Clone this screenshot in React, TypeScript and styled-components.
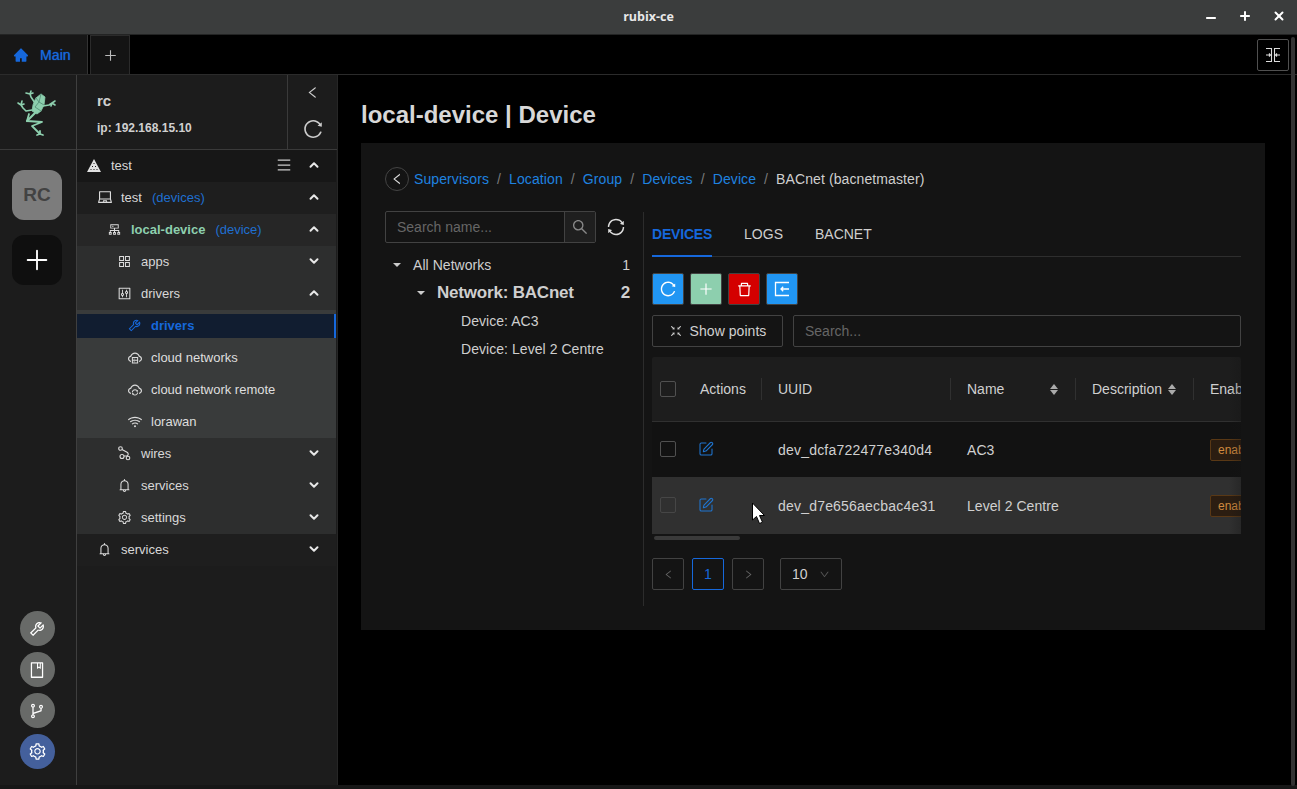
import React from "react";
import styled, { createGlobalStyle } from "styled-components";
import { ChevronUp, ChevronDown, Minus, Plus, X, SquarePen } from "lucide-react";
import {
  AiFillHome, AiOutlineLeft, AiOutlineRight, AiOutlineDown, AiOutlineReload, AiOutlineSync, AiOutlineMenu, AiOutlineLaptop, AiOutlineCluster,
  AiOutlineAppstore, AiOutlineControl, AiOutlineTool, AiOutlineCloudServer, AiOutlineCloudSync, AiOutlineWifi, AiOutlineBell,
  AiOutlineSetting, AiOutlineSearch, AiOutlineDelete, AiOutlineBook, AiOutlineBranches, AiOutlinePlus,
  AiOutlineFullscreenExit,
} from "react-icons/ai";

const Global = createGlobalStyle`
  html, body { margin: 0; padding: 0; background: #000; height: 789px; overflow: hidden; }
  body { font-family: "Liberation Sans", Arial, sans-serif; font-size: 14px; color: #d4d4d4; }
  * { box-sizing: border-box; }
`;
const Page = styled.div`width: 1297px; height: 789px; display: flex; flex-direction: column; position: relative; background: #000;`;
const TitleBar = styled.div`height: 35px; flex: none; background: #3b3d3d; border-bottom: 1px solid #232424; display: flex; align-items: center; position: relative; justify-content: center; color: #e8e8e8; font: 700 12.5px "Open Sans", sans-serif; padding-bottom: 2px;`;
const WinControls = styled.div`position: absolute; right: 11px; top: 9px; display: flex; gap: 20px; color: #fff; svg { display: block; } svg:first-child { transform: translateY(2px); }`;
const TabBar = styled.div`height: 40px; flex: none; display: flex; align-items: stretch; border-bottom: 1px solid #2b2b2b; position: relative;`;
const MainTab = styled.div`width: 88px; background: #171717; border-right: 1px solid #333; display: flex; align-items: center; padding-left: 13px; gap: 11px; color: #1668dc; font-size: 14px; letter-spacing: .1px; text-shadow: 0 0 1px #1668dc;`;
const AddTab = styled.div`margin-left: 2px; width: 40px; background: #141414; border: 1px solid #2b2b2b; border-bottom: 0; display: flex; align-items: center; justify-content: center; color: #bbb;`;
const CornerBtn = styled.div`position: absolute; right: 8px; top: 4px; width: 32px; height: 32px; border: 1px solid #505050; border-radius: 2px; display: flex; align-items: center; justify-content: center; background: #000;`;
const ScrollStub = styled.div`position: absolute; right: 2px; top: 2px; width: 4px; height: 749px; background: #333; border-radius: 2px;`;
const Body = styled.div`flex: 1; display: flex; min-height: 0; height: 710px;`;
const Rail = styled.div`width: 77px; flex: none; background: #1c1c1c; border-right: 1px solid #3f3f3f; padding-right: 2px; display: flex; flex-direction: column; align-items: center;`;
const LogoBox = styled.div`height: 75px; width: calc(100% + 2px); margin-right: -2px; flex: none; border-bottom: 1px solid #3a3a3a; padding: 2px 2px 0 0; display: flex; align-items: center; justify-content: center;`;
const Tile = styled.div<{ $bg: string; $c: string }>`margin-top: 20px; width: 50px; height: 50px; border-radius: 12px; background: ${p => p.$bg}; color: ${p => p.$c}; font-weight: 700; font-size: 19px; display: flex; align-items: center; justify-content: center; & + & { margin-top: 15px; }`;
const Dots = styled.div`margin-top: auto; margin-bottom: 16px; display: flex; flex-direction: column; gap: 6px;`;
const Dot = styled.div<{ $bg: string }>`width: 35px; height: 35px; border-radius: 50%; background: ${p => p.$bg}; color: #fff; display: flex; align-items: center; justify-content: center;`;
const Side = styled.div`width: 261px; flex: none; background: #1c1c1c; border-right: 1px solid #262626; display: flex; flex-direction: column;`;
const SideHead = styled.div`height: 75px; flex: none; display: flex; border-bottom: 1px solid #3a3a3a;`;
const HeadInfo = styled.div`flex: 1; padding: 16px 0 0 20px; color: #d0d0d0; font-weight: 700;`;
const HeadName = styled.div`font-size: 15px; line-height: 20px;`;
const HeadIp = styled.div`font-size: 12px; line-height: 16px; margin-top: 9px;`;
const HeadActions = styled.div`width: 50px; border-left: 1px solid #3a3a3a; display: flex; flex-direction: column; align-items: center; color: #ccc; padding-top: 10px; gap: 18px;`;
const RowList = styled.div`margin-right: 1px; display: flex; flex-direction: column;`;
const Row = styled.div<{ $bg: string; $pad: number }>`height: 32px; display: flex; align-items: center; background: ${p => p.$bg}; padding: 0 15px 2px ${p => p.$pad}px; color: #d8d8d8; font-size: 13px;`;
const Ico = styled.span`width: 24px; display: flex; align-items: center; color: #dcdcdc; flex: none;`;
const ActiveIco = styled(Ico)`color: #1668dc;`;
const RowText = styled.span<{ $green?: boolean }>`color: ${p => (p.$green ? "#8dcfae" : "#d8d8d8")}; font-weight: ${p => (p.$green ? 700 : 400)};`;
const Kind = styled.span`color: #1f6fd0; margin-left: 10px;`;
const Grow = styled.span`flex: 1;`;
const Chev = styled.span`color: #e8e8e8; display: flex;`;
const MenuIcon = styled.span`display: flex; margin-right: 15px; color: #ccc;`;
const SubGroup = styled.div`background: #393b3b;`;
const ActiveWrap = styled.div`padding: 4px 0;`;
const ActiveRow = styled.div`height: 24px; background: #111d30; border-right: 2px solid #1668dc; padding: 0 0 1px 50px; display: flex; align-items: center; color: #1668dc; font-weight: 700; font-size: 13px;`;
const SubRow = styled.div`height: 32px; padding: 0 0 1px 50px; display: flex; align-items: center; font-size: 13px; color: #dedede;`;
const Content = styled.div`flex: 1; padding: 24px 32px 0 23px; background: #000;`;
const Title = styled.h1`margin: 0; font-size: 24px; line-height: 32px; font-weight: 700; color: #d8d8d8; height: 44px;`;
const Panel = styled.div`height: 487px; background: #141414; padding: 20px 24px; display: flex; flex-direction: column;`;
const Crumbs = styled.div`display: flex; align-items: center; height: 32px; font-size: 14px; letter-spacing: .1px; color: #888; margin-bottom: 16px;`;
const Back = styled.span`width: 24px; height: 24px; border-radius: 50%; border: 1px solid #444; display: flex; align-items: center; justify-content: center; color: #ddd; margin-right: 5px;`;
const CrumbLink = styled.span`color: #1f83e0;`;
const Sep = styled.span`margin: 0 8px; color: #7a7a7a;`;
const CrumbNow = styled.span`color: #cfcfcf;`;
const Split = styled.div`display: flex; flex: 1;`;
const TreeCol = styled.div`width: 258px; flex: none; display: flex; flex-direction: column;`;
const SearchRow = styled.div`display: flex; align-items: center; gap: 10px; height: 32px; margin-bottom: 8px; color: #ddd;`;
const SearchBox = styled.div`width: 211px; height: 32px; display: flex; border: 1px solid #424242; border-radius: 2px; overflow: hidden;`;
const SearchInput = styled.div`flex: 1; padding-left: 11px; line-height: 30px; color: #666; font-size: 14px;`;
const SearchBtn = styled.div`width: 31px; border-left: 1px solid #424242; background: #1f1f1f; display: flex; align-items: center; justify-content: center; color: #888;`;
const TreeRow = styled.div<{ $pad: number; $bold?: boolean }>`display: flex; align-items: center; height: 28px; padding-left: ${p => p.$pad}px; padding-right: 13px; font-size: ${p => (p.$bold ? 17 : 14)}px; letter-spacing: ${p => (p.$bold ? -0.2 : 0.05)}px; font-weight: ${p => (p.$bold ? 700 : 400)}; color: #cfcfcf;`;
const Caret = styled.span`width: 0; height: 0; border-left: 4px solid transparent; border-right: 4px solid transparent; border-top: 4px solid #ccc; margin-right: 12px;`;
const Right = styled.div`flex: 1; min-width: 0; border-left: 1px solid #2c2c2c; padding-left: 8px; height: 394px; display: flex; flex-direction: column; margin-top: 1px;`;
const Tabs = styled.div`display: flex; gap: 32px; height: 45px; border-bottom: 1px solid #2e2e2e; font-size: 14px; color: #cfcfcf; flex: none;`;
const TabItem = styled.div<{ $on?: boolean }>`height: 45px; line-height: 44px; ${p => p.$on && "color:#1668dc;font-weight:700;letter-spacing:-0.2px;border-bottom:2px solid #1668dc;"}`;
const Tools = styled.div`display: flex; gap: 6px; margin-top: 16px; height: 32px;`;
const ToolBtn = styled.div<{ $bg: string }>`width: 32px; height: 32px; background: ${p => p.$bg}; border: 1px solid #424242; border-radius: 2px; color: #fff; display: flex; align-items: center; justify-content: center;`;
const FilterRow = styled.div`display: flex; gap: 10px; margin-top: 10px; height: 32px;`;
const ShowBtn = styled.div`width: 131px; border: 1px solid #424242; border-radius: 2px; display: flex; align-items: center; justify-content: center; gap: 7px; color: #d0d0d0; font-size: 14px; letter-spacing: .05px;`;
const FilterInput = styled.div`flex: 1; border: 1px solid #424242; border-radius: 2px; padding-left: 11px; line-height: 30px; color: #666; font-size: 14px;`;
const TableWrap = styled.div`margin-top: 10px; width: 589px; overflow: hidden; flex: none; position: relative;`;
const grid = `display: grid; grid-template-columns: 48px 61px 189px 125px 118px 60px; align-items: center;`;
const THead = styled.div`${grid} height: 65px; background: #1d1d1d; border-bottom: 1px solid #303030; border-radius: 2px 2px 0 0; font-size: 14px; color: #d0d0d0;`;
const Th = styled.div`height: 22px; display: flex; align-items: center; padding: 0 16px; border-left: 1px solid #303030; justify-content: space-between; white-space: nowrap;`;
const ThPlain = styled.div`padding-left: 0;`;
const Sort = styled.span`display: flex; flex-direction: column; gap: 1px; margin-right: 1px;`;
const SortUp = styled.i`width: 0; height: 0; border-left: 4px solid transparent; border-right: 4px solid transparent; border-bottom: 5px solid #aaa;`;
const SortDown = styled.i`width: 0; height: 0; border-left: 4px solid transparent; border-right: 4px solid transparent; border-top: 5px solid #aaa;`;
const TRow = styled.div<{ $hover?: boolean }>`${grid} height: ${p => (p.$hover ? 57 : 55)}px; background: ${p => (p.$hover ? "#303030" : "#121212")}; font-size: 14px; color: #d0d0d0;`;
const CheckCell = styled.div`padding: 0 0 1px 8px; display: flex;`;
const Check = styled.span<{ $dim?: boolean }>`width: 16px; height: 16px; border: 1px solid ${p => (p.$dim ? "#464646" : "#505050")}; border-radius: 2px;`;
const ActionCell = styled.div`color: #1f74cf; padding-bottom: 1px; margin-left: -2px; display: flex;`;
const Cell = styled.div`padding-left: 17px; white-space: nowrap; letter-spacing: .2px;`;
const NameCell = styled(Cell)`letter-spacing: .05px;`;
const Tag = styled.span`display: inline-block; height: 22px; line-height: 20px; padding: 0 7px; background: #2b1d11; border: 1px solid #593815; color: #d08a3f; font-size: 12px; border-radius: 2px; margin-left: 17px; justify-self: start; white-space: nowrap;`;
const Fade = styled.div`position: absolute; right: 0; top: 0; bottom: 0; width: 12px; background: linear-gradient(to right, transparent, rgba(20,20,20,.3));`;
const Bar = styled.div`height: 4px; margin: 2px 0 0 2px; width: 86px; background: #3a3a3a; border-radius: 2px;`;
const Pager = styled.div`display: flex; gap: 8px; margin-top: 18px; align-items: center;`;
const PageBtn = styled.div<{ $on?: boolean }>`width: 32px; height: 32px; border: 1px solid ${p => (p.$on ? "#1668dc" : "#424242")}; border-radius: 2px; display: flex; align-items: center; justify-content: center; color: ${p => (p.$on ? "#1668dc" : "#666")}; font-size: 14px;`;
const SizeSel = styled.div`margin-left: 8px; width: 62px; height: 32px; border: 1px solid #424242; border-radius: 2px; display: flex; align-items: center; justify-content: space-between; padding: 0 11px; color: #d0d0d0; font-size: 14px; svg { color: #555; }`;
const Cursor = styled.svg`position: absolute; left: 751px; top: 502px;`;
const Bottom = styled.div`height: 4px; background: #171717; flex: none;`;

const Frog = () => (
  <svg width="42" height="48" viewBox="0 0 42 48" fill="none" stroke="#8dcfae" strokeLinecap="round" strokeLinejoin="round">
    <path d="M20 9l5-4 4 3-1 8-3 6-4 3-5-3 1-6z" fill="#8dcfae" stroke="#8dcfae" strokeWidth=".8" />
    <path d="M25 5l-2 8 5 3M20 9l3 4-4 5 6 4" stroke="#4f8a72" strokeWidth=".8" />
    <path d="M19 14l-4-6-1-3M14 5l-4-1M14 5l1-3M14 5l3-1" strokeWidth="1.6" />
    <path d="M27 17l6-1 3-2M36 14l3-2M36 14l3 2M36 14l-1 3" strokeWidth="1.6" />
    <path d="M16 21l-6 1-3-3-2-3M5 16l-3-2M5 16l1-4M5 16l3-1" strokeWidth="1.6" />
    <path d="M13 25l-2 7 15 1-10 4 8 8M24 45l-3 1M24 45l3 1M24 45v-3" strokeWidth="1.8" />
    <path d="M19 24l-8 8" strokeWidth="2.2" />
  </svg>
);
const Cap = () => (
  <svg width="14" height="13" viewBox="0 0 14 13" fill="#e0e0e0">
    <path d="M7 0l7 13H0z" />
    <path d="M7 4v1M5.5 7v1M8.5 7v1M4 10v1M7 10v1M10 10v1" stroke="#1a1a1a" strokeWidth="1" />
  </svg>
);
const Wires = () => (
  <svg width="14" height="15" viewBox="0 0 14 15" fill="none" stroke="#dcdcdc" strokeWidth="1.1">
    <circle cx="3.5" cy="2.5" r="1.8" />
    <circle cx="5" cy="10.5" r="2" />
    <circle cx="11" cy="12" r="1.8" />
    <path d="M5 3.5l5.5 3a2 2 0 0 1-1 3.5H7" />
  </svg>
);
const Sorter = () => <Sort><SortUp /><SortDown /></Sort>;
const Up = () => <Chev><ChevronUp size={14} strokeWidth={3.4} /></Chev>;
const Dn = () => <Chev><ChevronDown size={14} strokeWidth={3.4} /></Chev>;

export default function App() {
  return (
    <Page>
      <Global />
      <TitleBar>
        rubix-ce
        <WinControls>
          <Minus size={14} strokeWidth={3.4} />
          <Plus size={14} strokeWidth={3.4} />
          <X size={14} strokeWidth={3.4} />
        </WinControls>
      </TitleBar>
      <TabBar>
        <MainTab><AiFillHome size={16} />Main</MainTab>
        <AddTab><AiOutlinePlus size={15} /></AddTab>
        <CornerBtn>
          <svg width="16" height="16" viewBox="0 0 16 16" fill="none" stroke="#ddd" strokeWidth="1.1"><path d="M1 1.5h5.5v13H1M15 1.5H9.5v13H15" /><path d="M1 8h4.5M4 6.5L5.5 8 4 9.5M15 8h-4.5M12 6.5L10.5 8l1.5 1.5" /></svg>
        </CornerBtn>
        <ScrollStub />
      </TabBar>
      <Body>
        <Rail>
          <LogoBox><Frog /></LogoBox>
          <Tile $bg="#7c7c7c" $c="#424242">RC</Tile>
          <Tile $bg="#0f0f0f" $c="#fff"><Plus size={32} strokeWidth={1.4} /></Tile>
          <Dots>
            <Dot $bg="#686a68"><AiOutlineTool size={18} /></Dot>
            <Dot $bg="#686a68"><AiOutlineBook size={18} /></Dot>
            <Dot $bg="#686a68"><AiOutlineBranches size={18} /></Dot>
            <Dot $bg="#44609c"><AiOutlineSetting size={19} /></Dot>
          </Dots>
        </Rail>
        <Side>
          <SideHead>
            <HeadInfo><HeadName>rc</HeadName><HeadIp>ip: 192.168.15.10</HeadIp></HeadInfo>
            <HeadActions><AiOutlineLeft size={15} /><AiOutlineReload size={22} /></HeadActions>
          </SideHead>
          <RowList>
            <Row $bg="#171717" $pad={10}><Ico><Cap /></Ico><RowText>test</RowText><Grow /><MenuIcon><AiOutlineMenu size={16} /></MenuIcon><Up /></Row>
            <Row $bg="#1e1e1e" $pad={20}><Ico><AiOutlineLaptop size={16} /></Ico><RowText>test</RowText><Kind>(devices)</Kind><Grow /><Up /></Row>
            <Row $bg="#262626" $pad={30}><Ico><AiOutlineCluster size={15} /></Ico><RowText $green>local-device</RowText><Kind>(device)</Kind><Grow /><Up /></Row>
            <Row $bg="#2d2e2e" $pad={40}><Ico><AiOutlineAppstore size={15} /></Ico><RowText>apps</RowText><Grow /><Dn /></Row>
            <Row $bg="#2d2e2e" $pad={40}><Ico><AiOutlineControl size={15} /></Ico><RowText>drivers</RowText><Grow /><Up /></Row>
            <SubGroup>
              <ActiveWrap><ActiveRow><ActiveIco><AiOutlineTool size={15} /></ActiveIco>drivers</ActiveRow></ActiveWrap>
              <SubRow><Ico><AiOutlineCloudServer size={16} /></Ico>cloud networks</SubRow>
              <SubRow><Ico><AiOutlineCloudSync size={16} /></Ico>cloud network remote</SubRow>
              <SubRow><Ico><AiOutlineWifi size={16} /></Ico>lorawan</SubRow>
            </SubGroup>
            <Row $bg="#2d2e2e" $pad={40}><Ico><Wires /></Ico><RowText>wires</RowText><Grow /><Dn /></Row>
            <Row $bg="#2d2e2e" $pad={40}><Ico><AiOutlineBell size={15} /></Ico><RowText>services</RowText><Grow /><Dn /></Row>
            <Row $bg="#2d2e2e" $pad={40}><Ico><AiOutlineSetting size={15} /></Ico><RowText>settings</RowText><Grow /><Dn /></Row>
            <Row $bg="#1e1e1e" $pad={20}><Ico><AiOutlineBell size={15} /></Ico><RowText>services</RowText><Grow /><Dn /></Row>
          </RowList>
        </Side>
        <Content>
          <Title>local-device | Device</Title>
          <Panel>
            <Crumbs>
              <Back><AiOutlineLeft size={14} /></Back>
              <CrumbLink>Supervisors</CrumbLink><Sep>/</Sep>
              <CrumbLink>Location</CrumbLink><Sep>/</Sep>
              <CrumbLink>Group</CrumbLink><Sep>/</Sep>
              <CrumbLink>Devices</CrumbLink><Sep>/</Sep>
              <CrumbLink>Device</CrumbLink><Sep>/</Sep>
              <CrumbNow>BACnet (bacnetmaster)</CrumbNow>
            </Crumbs>
            <Split>
              <TreeCol>
                <SearchRow>
                  <SearchBox><SearchInput>Search name...</SearchInput><SearchBtn><AiOutlineSearch size={18} /></SearchBtn></SearchBox>
                  <AiOutlineSync size={20} />
                </SearchRow>
                <TreeRow $pad={8}><Caret />All Networks<Grow />1</TreeRow>
                <TreeRow $pad={32} $bold><Caret />Network: BACnet<Grow />2</TreeRow>
                <TreeRow $pad={76}>Device: AC3</TreeRow>
                <TreeRow $pad={76}>Device: Level 2 Centre</TreeRow>
              </TreeCol>
              <Right>
                <Tabs>
                  <TabItem $on>DEVICES</TabItem>
                  <TabItem>LOGS</TabItem>
                  <TabItem>BACNET</TabItem>
                </Tabs>
                <Tools>
                  <ToolBtn $bg="#2196f3"><AiOutlineReload size={18} /></ToolBtn>
                  <ToolBtn $bg="#8dcfae"><AiOutlinePlus size={16} /></ToolBtn>
                  <ToolBtn $bg="#d40000"><AiOutlineDelete size={17} /></ToolBtn>
                  <ToolBtn $bg="#2196f3">
                    <svg width="16" height="16" viewBox="0 0 16 16" fill="none" stroke="#fff" strokeWidth="1.3"><path d="M15 1.5H1.5v13H15M15 8H7M9.2 5.8L7 8l2.2 2.2" /></svg>
                  </ToolBtn>
                </Tools>
                <FilterRow>
                  <ShowBtn><AiOutlineFullscreenExit size={14} />Show points</ShowBtn>
                  <FilterInput>Search...</FilterInput>
                </FilterRow>
                <TableWrap>
                  <THead>
                    <CheckCell><Check /></CheckCell>
                    <ThPlain>Actions</ThPlain>
                    <Th>UUID</Th>
                    <Th>Name<Sorter /></Th>
                    <Th>Description<Sorter /></Th>
                    <Th>Enabled</Th>
                  </THead>
                  <TRow>
                    <CheckCell><Check /></CheckCell>
                    <ActionCell><SquarePen size={16} strokeWidth={1.6} /></ActionCell>
                    <Cell>dev_dcfa722477e340d4</Cell>
                    <NameCell>AC3</NameCell><Cell />
                    <Tag>enabled</Tag>
                  </TRow>
                  <TRow $hover>
                    <CheckCell><Check $dim /></CheckCell>
                    <ActionCell><SquarePen size={16} strokeWidth={1.6} /></ActionCell>
                    <Cell>dev_d7e656aecbac4e31</Cell>
                    <NameCell>Level 2 Centre</NameCell><Cell />
                    <Tag>enabled</Tag>
                  </TRow>
                  <Fade />
                </TableWrap>
                <Bar />
                <Pager>
                  <PageBtn><AiOutlineLeft size={11} /></PageBtn>
                  <PageBtn $on>1</PageBtn>
                  <PageBtn><AiOutlineRight size={11} /></PageBtn>
                  <SizeSel>10<AiOutlineDown size={11} /></SizeSel>
                </Pager>
              </Right>
            </Split>
          </Panel>
        </Content>
      </Body>
      <Bottom />
      <Cursor width="14" height="24" viewBox="0 0 14 24"><path d="M1.5 1v17l4-3.5 3 7 3-1.3-3-6.7h5z" fill="#fff" stroke="#000" strokeWidth="1" /></Cursor>
    </Page>
  );
}
